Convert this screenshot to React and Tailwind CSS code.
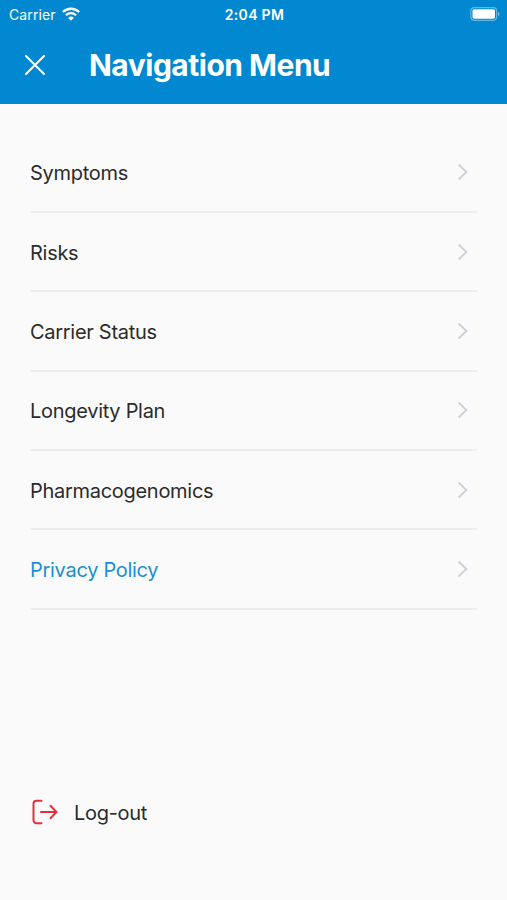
const items = [
	{ label: "Symptoms" },
	{ label: "Risks" },
	{ label: "Carrier Status" },
	{ label: "Longevity Plan" },
	{ label: "Pharmacogenomics" },
	{ label: "Privacy Policy", active: true },
];

const WifiIcon = () => (
	<svg className="-mt-px" width="18" height="14" viewBox="0 0 18 14" fill="none">
		<path d="M.9 5a11.600 11.600 0 0 1 16.200 0" stroke="white" strokeWidth="2.4" />
		<path d="M3.900 8.200a7.300 7.300 0 0 1 10.200 0" stroke="white" strokeWidth="2.2" />
		<path d="M9 13.800 6.200 10.900a4 4 0 0 1 5.600 0Z" fill="white" />
	</svg>
);

const BatteryIcon = () => (
	<svg className="-mt-px" width="30" height="14" viewBox="0 0 30 14" fill="none">
		<rect x="0.8" y="0.7" width="25.8" height="12.6" rx="3.5" stroke="white" strokeOpacity="0.4" strokeWidth="1.2" />
		<rect x="2.5" y="2.300" width="22.500" height="9.400" rx="1.8" fill="white" />
		<path d="M28 4.800v4.400c2-.8 2-3.600 0-4.400Z" fill="white" fillOpacity="0.45" />
	</svg>
);

const StatusBar = () => (
	<div className="grid h-7 grid-cols-3 items-center pl-[9px] pr-[7px] text-[14px] text-white">
		<div className="flex items-center gap-1.5">
			<span className="tracking-[0.1px]">Carrier</span>
			<WifiIcon />
		</div>
		<span className="text-center text-[14px] font-semibold tracking-[0.3px]">2:04 PM</span>
		<div className="flex justify-end">
			<BatteryIcon />
		</div>
	</div>
);

const Chevron = () => (
	<svg width="12" height="18" viewBox="0 0 12 18" fill="none">
		<path d="m1.5 1.5 8 7.500-8 7.500" stroke="#cccfda" strokeWidth="1.8" />
	</svg>
);

const MenuItem = ({ label, active }) => (
	<li className="flex h-[79.4px] flex-col">
		<button className="flex flex-1 items-center justify-between pr-2 text-left">
			<span className={active ? "mt-0.5 text-[#1a90d0]" : "mt-0.5 text-[#2b2b2b]"}>{label}</span>
			<Chevron />
		</button>
		<div className="h-[2px] bg-[#ebedef]" />
	</li>
);

const App = () => (
	<div className="flex h-[900px] w-[507px] flex-col overflow-hidden bg-[#fafafa] font-['Inter',sans-serif] text-[20px] tracking-[-0.29px]">
		<header className="h-[103.5px] bg-[#0288d0]">
			<StatusBar />
			<div className="flex h-[74px] items-center pl-[25px] text-white">
				<button aria-label="Close">
					<svg width="20" height="20" viewBox="0 0 20 20" fill="none">
						<path d="m1 1 18 18M19 1 1 19" stroke="white" strokeWidth="2" strokeLinecap="round" />
					</svg>
				</button>
				<h1 className="ml-11 text-[30px] font-bold tracking-[-0.5px]">Navigation Menu</h1>
			</div>
		</header>
		<ul className="mt-[30px] px-[30px]">
			{items.map((item) => (
				<MenuItem key={item.label} {...item} />
			))}
		</ul>
		<button className="mb-[72px] ml-8 mt-auto flex items-center text-[#2b2b2b]">
			<svg className="-mt-0.5" width="26" height="26" viewBox="0 0 26 26" fill="none" stroke="#e5303b" strokeWidth="2" strokeLinecap="round">
				<path d="M9.500 1.800H4.500a3 3 0 0 0-3 3v16.400a3 3 0 0 0 3 3h5" />
				<path d="M9 13H24.500M18.500 6.800 24.500 13l-6 6.200" />
			</svg>
			<span className="ml-4">Log-out</span>
		</button>
	</div>
);

export default App;
